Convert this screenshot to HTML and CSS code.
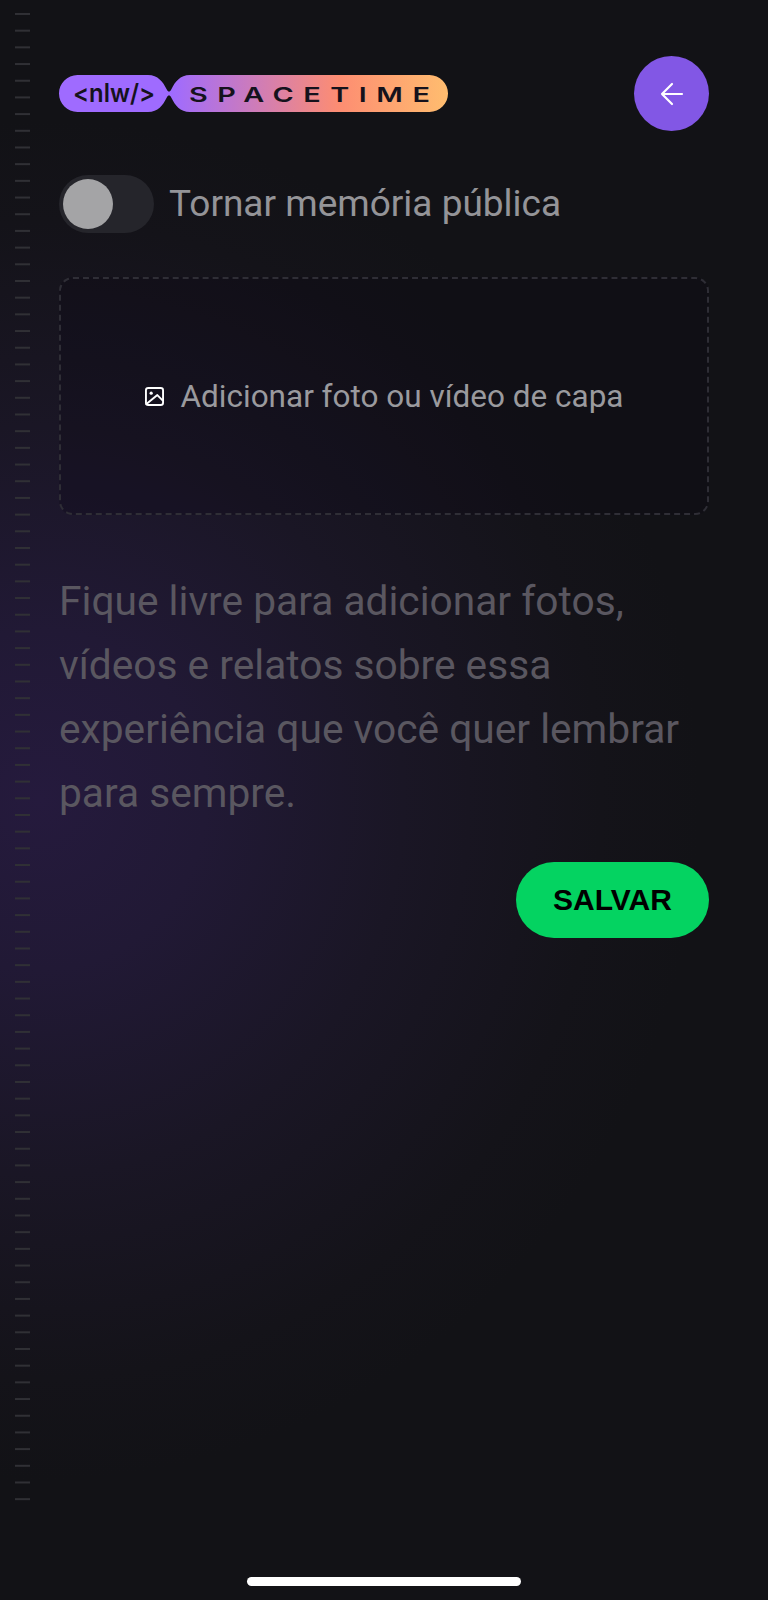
FILE: index.html
```html
<!doctype html>
<html lang="pt-BR">
<head>
<meta charset="UTF-8">
<title>Nova memória</title>
<link rel="stylesheet" href="styles.css">
</head>
<body>
	<div class="stripes"></div>
	<div class="wrapper">
		<div class="top">
			<svg class="logo" width="389" height="37" viewBox="0 0 389 37">
				<defs>
					<linearGradient id="logo_grad" x1="0" x2="1" y1="0" y2="0">
						<stop offset="0.29" stop-color="#9f6bff"/>
						<stop offset="0.72" stop-color="#fd8d72"/>
						<stop offset="1" stop-color="#ffbd6f"/>
					</linearGradient>
				</defs>
				<path fill="url(#logo_grad)" d="M18.500 0H89C99 0 104 7 107.500 14C108.500 16 109 16.500 110 16.500C111 16.500 111.500 16 112.500 14C116 7 121 0 131 0H370.500C380.700 0 389 8.300 389 18.500C389 28.700 380.700 37 370.500 37H131C121 37 116 30 112.500 23C111.500 21 111 20.500 110 20.500C109 20.500 108.500 21 107.500 23C104 30 99 37 89 37H18.500C8.300 37 0 28.700 0 18.500C0 8.300 8.300 0 18.500 0Z"/>
				<text class="logo_nlw" x="14" y="27" textLength="82" lengthAdjust="spacingAndGlyphs">&lt;nlw/&gt;</text>
				<text class="logo_space" transform="scale(1.400,1)" x="92.900" y="27" textLength="172" lengthAdjust="spacing">SPACETIME</text>
			</svg>
			<button class="bt_back">
				<svg width="26" height="26" viewBox="0 0 26 26" fill="none" stroke="#fff" stroke-width="2.200" stroke-linecap="round" stroke-linejoin="round">
					<path d="M23 13H3M13 3L3 13L13 23"/>
				</svg>
			</button>
		</div>

		<div class="public">
			<div class="toggle"><div class="thumb"></div></div>
			<span class="public_label">Tornar memória pública</span>
		</div>

		<div class="upload">
			<svg width="19" height="19" viewBox="0 0 20 20" fill="none" stroke="#fff" stroke-width="2" stroke-linejoin="round" stroke-linecap="round">
				<rect x="1" y="1" width="18" height="18" rx="2.500"/>
				<path d="M1.500 18L13 8.500L18.500 14"/>
				<circle cx="6.500" cy="6.500" r="1.700" fill="#fff" stroke="none"/>
			</svg>
			<span>Adicionar foto ou vídeo de capa</span>
		</div>

		<div class="desc">Fique livre para adicionar fotos, vídeos e relatos sobre essa experiência que você quer lembrar para sempre.</div>

		<div class="actions">
			<button class="bt_save">SALVAR</button>
		</div>
	</div>
	<div class="home_bar"></div>
</body>
</html>
```

FILE: styles.css
```css
*{
	box-sizing:border-box;
}
html,body{
	height:100%;
}
body{
	margin:0;
	height:1600px;
	position:relative;
	overflow:hidden;
	font-family:Roboto,sans-serif;
	background:radial-gradient(ellipse 660px 680px at 40px 800px,#251a3d 0%,#211935 25%,#1a1625 55%,#141319 85%,#121216 100%);
	background-color:#121216;
}
.stripes{
	position:absolute;
	left:15px;
	top:13px;
	width:15px;
	height:1488px;
	background:linear-gradient(#303035 0,#303035 1.500px,transparent 1.500px);
	background-size:15px 16.700px;
}
.wrapper{
	padding:56px 59px 0 59px;
}
.top{
	display:flex;
	justify-content:space-between;
	align-items:center;
}
.logo_nlw{
	font-family:Inter,sans-serif;
	font-size:25px;
	font-weight:600;
	fill:#15121c;
}
.logo_space{
	font-family:Inter,sans-serif;
	font-size:20.600px;
	font-weight:600;
	fill:#15121c;
}
.bt_back{
	width:75px;
	height:75px;
	border:none;
	border-radius:50%;
	background:#8257e5;
	display:flex;
	align-items:center;
	justify-content:center;
	padding:0;
}
.public{
	margin-top:44px;
	display:flex;
	align-items:center;
	gap:15px;
}
.toggle{
	width:95px;
	height:58px;
	border-radius:29px;
	background:#25252b;
	padding:4px;
}
.thumb{
	width:50px;
	height:50px;
	border-radius:50%;
	background:#a4a4a6;
}
.public_label{
	padding-bottom:2px;
	font-size:37px;
	color:#949498;
}
.upload{
	margin-top:44px;
	height:238px;
	border:2px dashed #2f2e36;
	border-radius:14px;
	background:rgba(8,4,20,0.22);
	display:flex;
	align-items:center;
	justify-content:center;
	gap:17px;
	font-size:31.500px;
	color:#9a9a9e;
}
.desc{
	margin-top:54px;
	font-size:40.700px;
	line-height:64px;
	color:#5a5760;
}
.actions{
	margin-top:37px;
	display:flex;
	justify-content:flex-end;
}
.bt_save{
	width:193px;
	height:76px;
	border:none;
	border-radius:38px;
	background:#04d361;
	color:#000;
	font-family:"Liberation Sans",sans-serif;
	font-size:30px;
	font-weight:bold;
	padding:0;
}
.home_bar{
	position:absolute;
	left:247px;
	top:1577px;
	width:274px;
	height:9px;
	border-radius:5px;
	background:#fff;
}
```
